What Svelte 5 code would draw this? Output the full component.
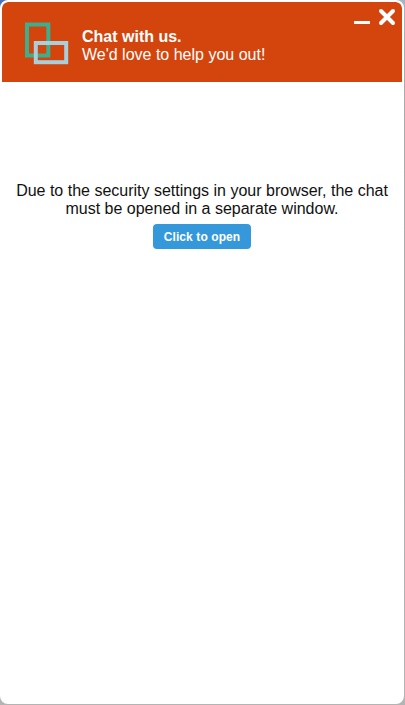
<script>
  const title = 'Chat with us.';
  const subtitle = "We'd love to help you out!";
</script>

<div class="page">
  <section class="chat">
    <header>
      <svg class="logo" width="44" height="44" viewBox="0 0 44 44" fill="none" stroke-width="4">
        <rect x="3" y="2.5" width="21.3" height="31" stroke="#3fae8c" />
        <rect x="11.8" y="21" width="30.4" height="19.2" stroke="#a9cfdb" />
      </svg>
      <div class="greeting">
        <strong>{title}</strong>
        <span>{subtitle}</span>
      </div>
      <div class="controls">
        <button aria-label="Minimize">
          <svg width="16" height="18" viewBox="0 0 16 18"><path d="M0 14.5H16" stroke="#fff" stroke-width="3" /></svg>
        </button>
        <button aria-label="Close">
          <svg width="18" height="18" viewBox="0 0 18 18"><path d="M3 3L15 15M15 3L3 15" stroke="#fff" stroke-width="4" stroke-linecap="round" /></svg>
        </button>
      </div>
    </header>
    <main>
      <p>Due to the security settings in your browser, the chat must be opened in a separate window.</p>
      <button class="open">Click to open</button>
    </main>
  </section>
</div>

<style>
  .page {
    box-sizing: border-box;
    width: 405px;
    height: 705px;
    padding: 0 1px 1px 0;
    background: linear-gradient(90deg, #4a74b8 0 12px, transparent 12px) 0 0 / 100% 12px no-repeat,
      linear-gradient(#a7b4c4 0, #a9a9a9 100px, #b4b4b4 100%);
    font-family: "Liberation Sans", Arial, sans-serif;
    font-size: 16px;
    line-height: 18px;
    overflow: hidden;
  }
  .chat {
    box-sizing: border-box;
    height: 704px;
    border: 2px solid #fff;
    border-radius: 8px;
    background: #fff;
    overflow: hidden;
  }
  header {
    box-sizing: border-box;
    display: flex;
    width: 400px;
    height: 80px;
    padding: 20px 0 0 22px;
    background: #d3450d;
    color: #fff;
    border-radius: 6px 6px 0 0;
  }
  .logo {
    overflow: visible;
  }
  .greeting {
    display: flex;
    flex-direction: column;
    padding: 6px 0 0 14px;
    flex: 1;
    white-space: nowrap;
  }
  .controls {
    display: flex;
    gap: 8px;
    margin: -14px 6px 0 0;
    height: 18px;
  }
  .controls button {
    display: flex;
    padding: 0;
    border: 0;
    background: none;
  }
  main {
    display: flex;
    flex-direction: column;
    align-items: center;
    padding: 100px 10px 0;
    color: #111;
  }
  p {
    margin: 0 0 6px;
    text-align: center;
  }
  .open {
    box-sizing: border-box;
    width: 98px;
    height: 25px;
    padding: 1px 0 0;
    border: 0;
    border-radius: 4px;
    background: #3498db;
    color: #fff;
    font: bold 12px/24px "Liberation Sans", Arial, sans-serif;
    letter-spacing: 0.09px;
  }
</style>
